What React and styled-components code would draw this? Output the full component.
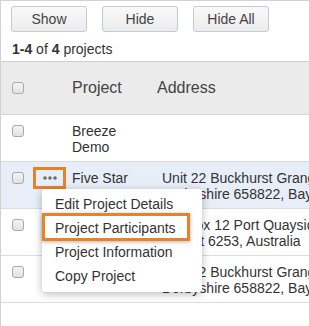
import React from "react";
import styled, { createGlobalStyle } from "styled-components";

const Global = createGlobalStyle`
  html, body { margin: 0; padding: 0; background: #fff; }
  body { font-family: "Liberation Sans", Arial, sans-serif; color: #333; }
`;

const Frame = styled.div`
  width: 309px;
  height: 326px;
  box-sizing: border-box;
  border-top: 1px solid #d2d2d2;
  border-left: 1px solid #d2d2d2;
  overflow: hidden;
`;

const Toolbar = styled.div`
  display: flex;
  gap: 15px;
  padding: 5px 0 0 10px;
`;

const Button = styled.button`
  width: 76px;
  height: 26px;
  box-sizing: border-box;
  border: 1px solid #c3cad1;
  border-radius: 3px;
  background: linear-gradient(#f9f9f9, #ececec);
  font-family: "Liberation Sans", Arial, sans-serif;
  font-size: 14px;
  color: #444;
  padding: 0;
`;

const Count = styled.div`
  font-size: 14px;
  line-height: 16px;
  padding: 9px 0 4px 11px;
  color: #333;
  b { font-weight: bold; }
`;

const Table = styled.table`
  border-collapse: collapse;
  table-layout: fixed;
  width: 366px;
  font-size: 14px;
  line-height: 16px;
`;

const HeadRow = styled.tr`
  background: #ebebeb;
  border-top: 1px solid #cfcfcf;
  border-bottom: 1px solid #d6d6d6;
`;

const Th = styled.th`
  height: 52px;
  padding: 0 0 0 ${(p) => p.$pl || 0}px;
  text-align: left;
  font-weight: normal;
  font-size: 16px;
  color: #444;
  vertical-align: middle;
`;

const Row = styled.tr`
  background: ${(p) => (p.$active ? "#e7eef8" : "#fff")};
  border-bottom: 1px solid #dcdcdc;
`;

const Td = styled.td`
  padding: ${(p) => p.$pt ?? 8}px 4px 6px ${(p) => p.$pl || 0}px;
  vertical-align: top;
  height: 32px;
  position: relative;
`;

const Check = styled.span`
  display: block;
  width: 12px;
  height: 12px;
  box-sizing: border-box;
  margin-top: ${(p) => p.$mt || 0}px;
  border: 1px solid #a9a9a9;
  border-radius: 3px;
  background: linear-gradient(#f3f3f3, #e2e2e2);
`;

const DotsButton = styled.div`
  width: 33px;
  height: 22px;
  box-sizing: border-box;
  margin-left: 3px;
  border: 3px solid #e8822a;
  display: flex;
  align-items: center;
  justify-content: center;
`;

const Menu = styled.div`
  position: absolute;
  left: 12px;
  top: 27px;
  width: 160px;
  padding: 3px 0 4px;
  background: #fff;
  border-radius: 3px;
  box-shadow: 0 2px 8px rgba(0, 0, 0, 0.28);
  z-index: 5;
`;

const MenuItem = styled.div`
  height: 24px;
  line-height: 24px;
  padding-left: 13px;
  font-size: 14px;
  color: #333;
  white-space: nowrap;
`;

const Highlight = styled.div`
  position: absolute;
  left: 0;
  top: 24px;
  width: 148px;
  height: 28px;
  box-sizing: border-box;
  border: 3px solid #e8822a;
  box-shadow: 0 1px 4px rgba(0, 0, 0, 0.3);
`;

const Dots = () => (
  <svg width="14" height="4" viewBox="0 0 14 4">
    {[2, 7, 12].map((x) => (
      <circle key={x} cx={x} cy="2" r="1.8" fill="#6b6b6b" />
    ))}
  </svg>
);

const rows = [
  { name: "Breeze Demo", address: "" },
  { name: "Five Star", address: "Unit 22 Buckhurst Grange, Derbyshire 658822, Bay View", active: true },
  { name: "", address: "PO Box 12 Port Quayside, Hobart 6253, Australia" },
  { name: "", address: "Unit 22 Buckhurst Grange, Derbyshire 658822, Bay View" },
];

export default function App() {
  return (
    <>
      <Global />
      <Frame>
        <Toolbar>
          <Button>Show</Button>
          <Button>Hide</Button>
          <Button>Hide All</Button>
        </Toolbar>
        <Count>
          <b>1-4</b> of <b>4</b> projects
        </Count>
        <Table>
          <colgroup>
            <col style={{ width: 29 }} />
            <col style={{ width: 38 }} />
            <col style={{ width: 89 }} />
            <col style={{ width: 210 }} />
          </colgroup>
          <thead>
            <HeadRow>
              <Th $pl={11}>
                <Check />
              </Th>
              <Th />
              <Th $pl={4}>Project</Th>
              <Th>Address</Th>
            </HeadRow>
          </thead>
          <tbody>
            {rows.map((r, i) => (
              <Row key={i} $active={r.active}>
                <Td $pl={11}>
                  <Check $mt={2} />
                </Td>
                <Td $pt={r.active ? 5 : 8}>
                  {r.active && (
                    <>
                      <DotsButton>
                        <Dots />
                      </DotsButton>
                      <Menu>
                        <MenuItem>Edit Project Details</MenuItem>
                        <MenuItem>Project Participants</MenuItem>
                        <MenuItem>Project Information</MenuItem>
                        <MenuItem>Copy Project</MenuItem>
                        <Highlight />
                      </Menu>
                    </>
                  )}
                </Td>
                <Td $pl={4}>{r.name}</Td>
                <Td $pl={5}>{r.address}</Td>
              </Row>
            ))}
          </tbody>
        </Table>
      </Frame>
    </>
  );
}
